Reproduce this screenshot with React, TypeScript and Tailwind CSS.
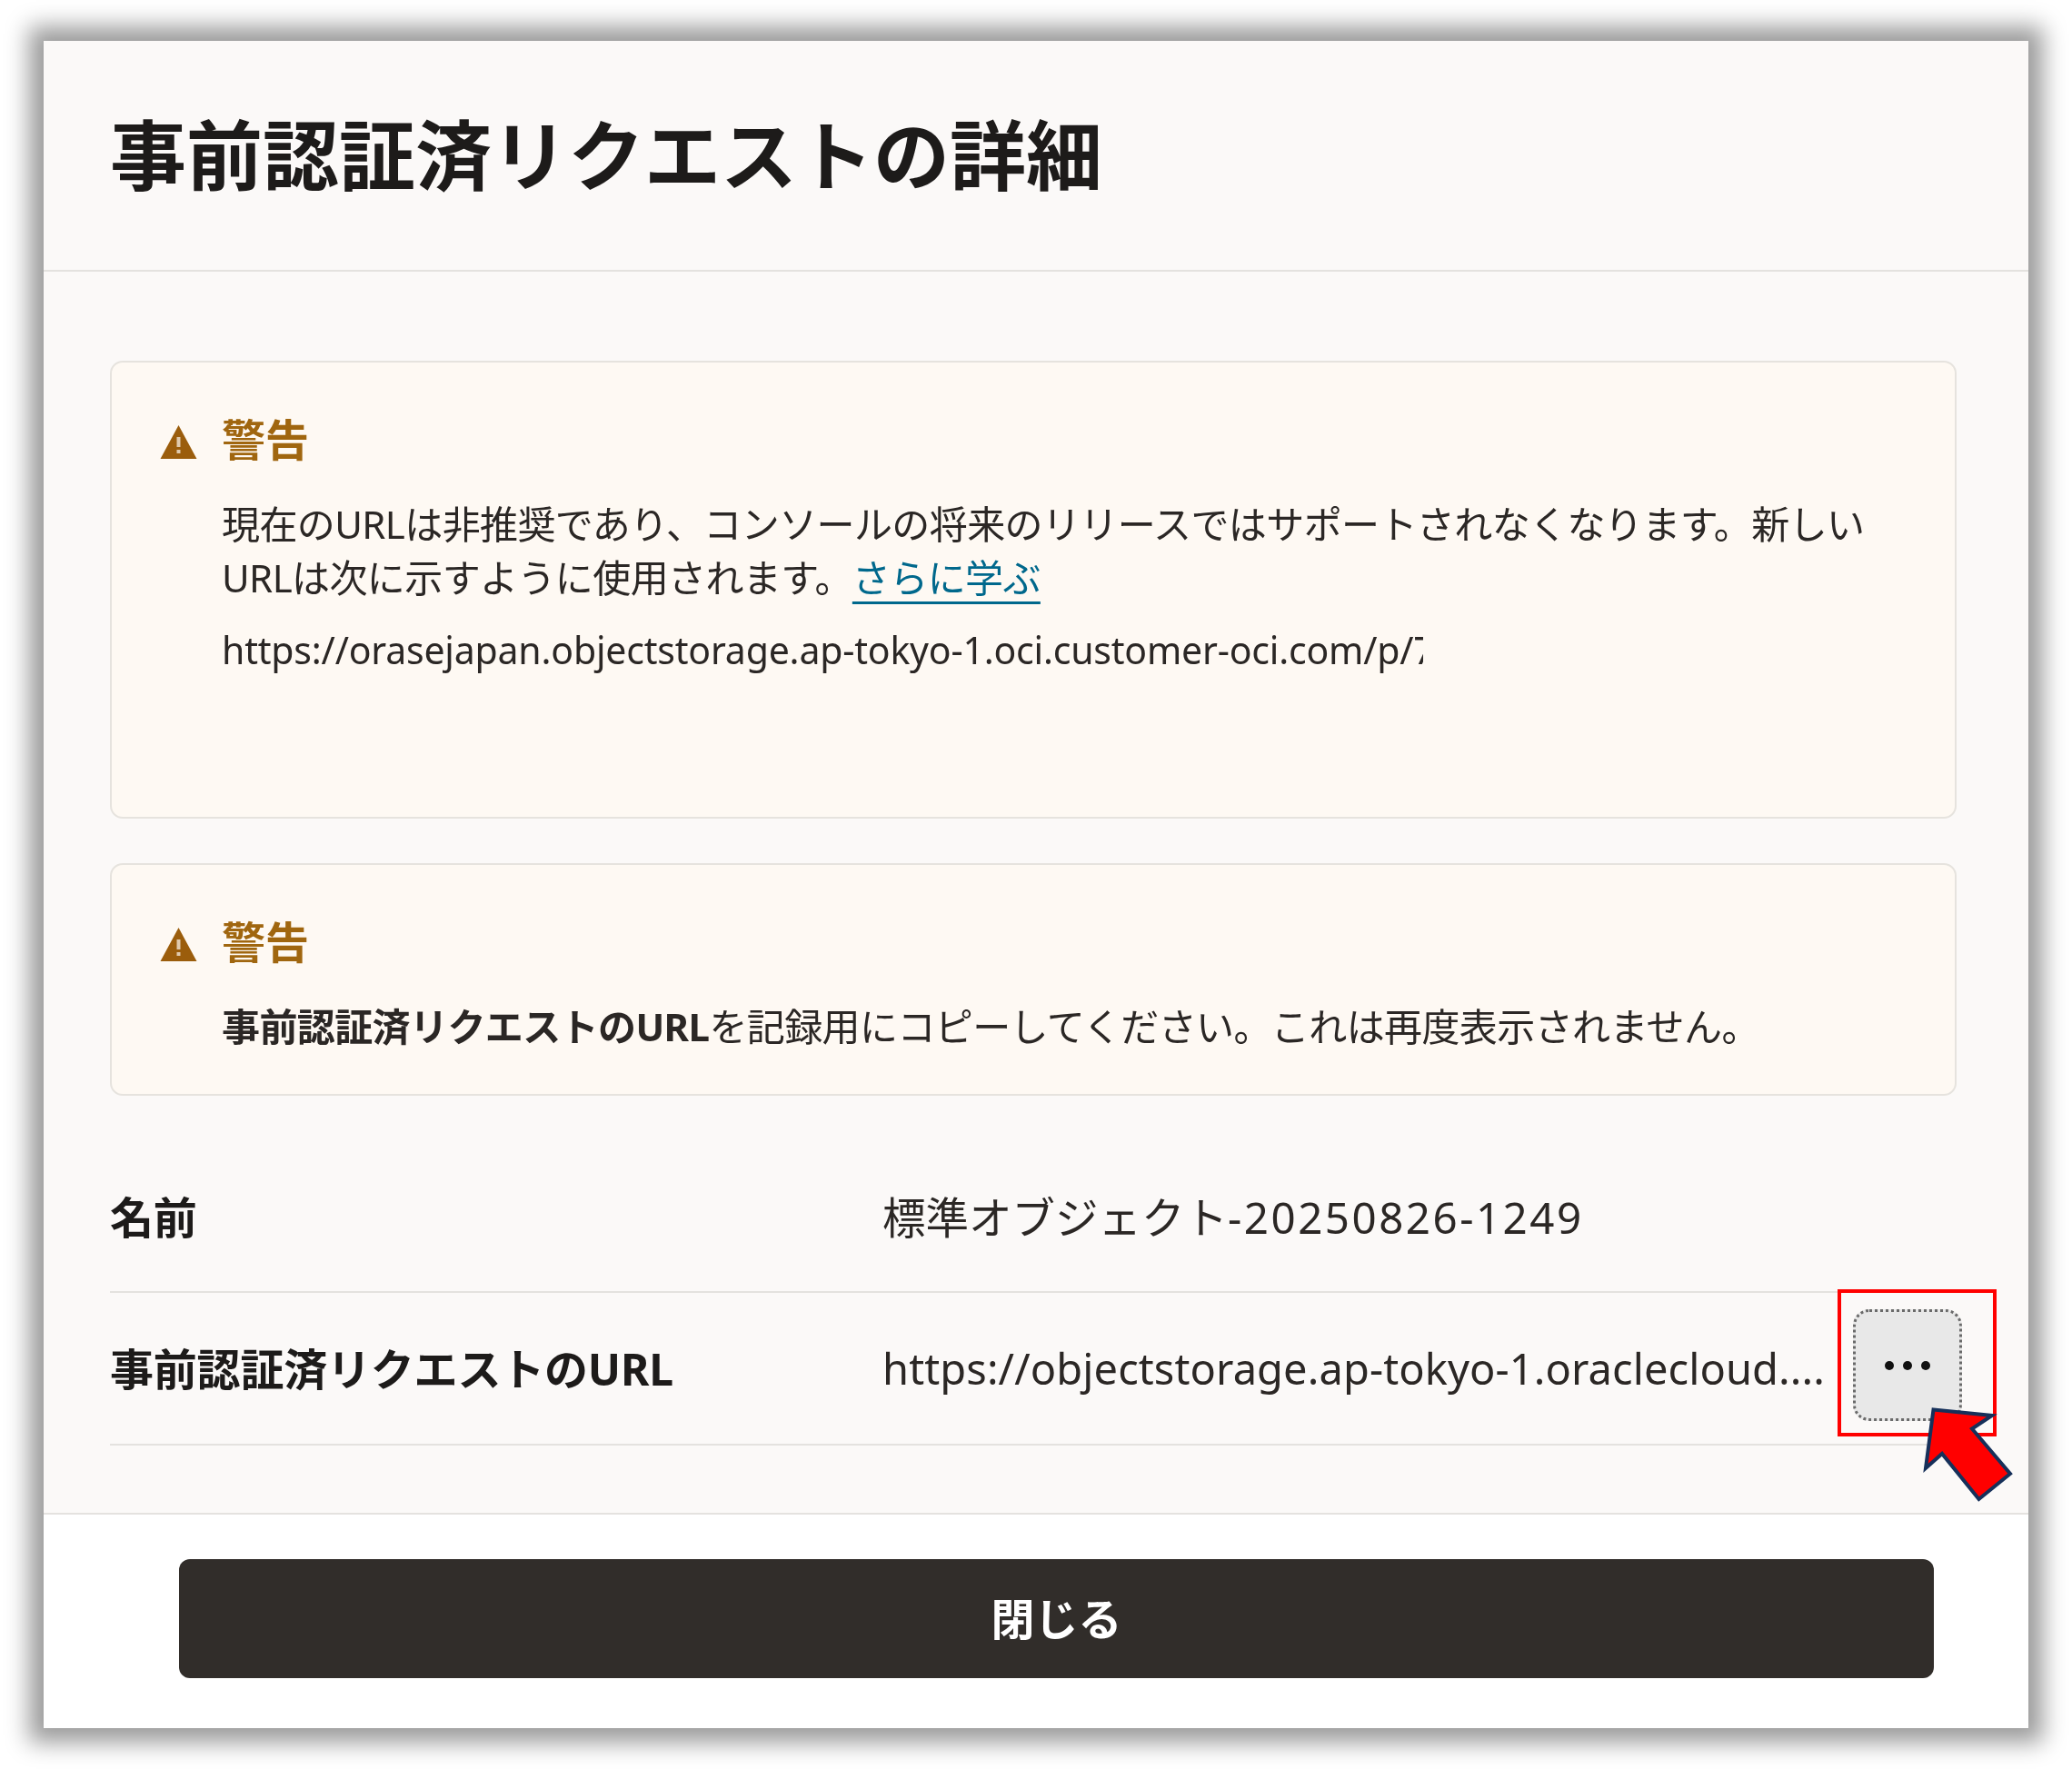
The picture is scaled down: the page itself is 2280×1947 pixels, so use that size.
const jp = "font-['Noto_Sans','Noto_Sans_CJK_JP',sans-serif]";

function Warn() {
  return (
    <svg viewBox="0 0 40 38" className="w-[41px] h-[38px] shrink-0 blur-[0.5px] mt-[3px]">
      <path d="M20 1 L40 38 L0 38 Z" fill="#9b5d0c" />
      <rect x="18" y="14" width="4" height="11" fill="#fef9f3" opacity="0.7" />
      <rect x="18" y="28" width="4" height="4" fill="#fef9f3" opacity="0.7" />
    </svg>
  );
}

function Notice({ className, children }: { className: string; children: React.ReactNode }) {
  return (
    <div className={`rounded-[14px] border-2 border-[#e6e3de] bg-[#fef9f3] pl-[53px] pr-[40px] ${className}`}>
      <div className="flex items-center gap-[27px] h-[58px] mt-[56px]">
        <Warn />
        <span className="text-[48px] leading-[58px] font-bold text-[#a0660f] blur-[0.7px]">警告</span>
      </div>
      <div className="pl-[68px] text-[#2b2725] text-[42px] leading-[59px] tracking-[-0.6px] blur-[0.7px]">{children}</div>
    </div>
  );
}

function Row({ label, children, className }: { label: string; children: React.ReactNode; className: string }) {
  return (
    <div className={`flex items-center border-b-2 border-[#e4e2df] ${className}`}>
      <div className="w-[850px] shrink-0 text-[48px] font-bold text-[#1d1b1a] tracking-[-0.2px] pt-[2px] blur-[0.7px]">{label}</div>
      {children}
    </div>
  );
}

export default function App() {
  return (
    <div className={`w-[2280px] h-[1947px] bg-white pt-[45px] pl-[48px] ${jp}`}>
      <div className="relative w-[2184px] h-[1857px] flex flex-col bg-white shadow-[0_0_24px_16px_#9c9c9c]">
        <header className="h-[254px] shrink-0 bg-[#fbf9f8] border-b-2 border-[#e4e2df] flex items-center pl-[73px]">
          <h1 className="text-[84px] font-bold text-[#1d1b1a] leading-none blur-[0.7px]">事前認証済リクエストの詳細</h1>
        </header>
        <main className="flex-1 bg-[#fbf9f8] border-b-2 border-[#e4e2df] pl-[73px] pr-[79px] pt-[98px]">
          <Notice className="h-[504px] mb-[49px]">
            <p className="mt-[34px]">現在のURLは非推奨であり、コンソールの将来のリリースではサポートされなくなります。新しい<br />URLは次に示すように使用されます。<a className="text-[#00688c] underline decoration-[3px] underline-offset-[10px]">さらに学ぶ</a></p>
            <p className="mt-[21px] w-[1322px] overflow-hidden whitespace-nowrap text-[41px] tracking-[-0.2px]">https://orasejapan.objectstorage.ap-tokyo-1.oci.customer-oci.com/p/7</p>
          </Notice>
          <Notice className="h-[256px] mb-[50px]">
            <p className="mt-[34px]"><b>事前認証済リクエストのURL</b>を記録用にコピーしてください。これは再度表示されません。</p>
          </Notice>
          <Row label="名前" className="h-[167px]">
            <div className="text-[47.5px] text-[#2b2725] whitespace-nowrap pt-[2px] blur-[0.7px]">標準オブジェクト<span className="tracking-[2.5px]">-20250826-1249</span></div>
          </Row>
          <Row label="事前認証済リクエストのURL" className="h-[168px]">
            <div className="text-[47px] text-[#2b2725] whitespace-nowrap tracking-[0.1px] blur-[0.7px]">https://objectstorage.ap-tokyo-1.oraclecloud....</div>
            <button className="absolute left-[1991px] top-[1396px] w-[120px] h-[123px] rounded-[18px] bg-[#e8e8e8] border-[3px] border-dotted border-[#6a6a6a] flex items-center justify-center gap-[10px]">
              <span className="w-[10px] h-[10px] rounded-full bg-[#111]" />
              <span className="w-[10px] h-[10px] rounded-full bg-[#111]" />
              <span className="w-[10px] h-[10px] rounded-full bg-[#111]" />
            </button>
          </Row>
        </main>
        <footer className="h-[235px] shrink-0 bg-white flex items-start pl-[149px] pt-[49px]">
          <button className="w-[1931px] h-[131px] rounded-[12px] bg-[#312d2a] text-white text-[48px] font-bold"><span className="blur-[0.7px] inline-block">閉じる</span></button>
        </footer>
        <div className="absolute left-[1974px] top-[1374px] w-[175px] h-[162px] border-4 border-[#ff0000]" />
        <svg className="absolute left-[2064px] top-[1499px] overflow-visible" width="105" height="112" viewBox="2113 1544 105 112">
          <path d="M2128.5 1551.5 L2193 1558 L2171 1572.5 L2213 1622 L2178.5 1650 L2138 1600 L2120 1616 Z" fill="#ff0000" stroke="#16305a" strokeWidth="4" />
        </svg>
      </div>
    </div>
  );
}
